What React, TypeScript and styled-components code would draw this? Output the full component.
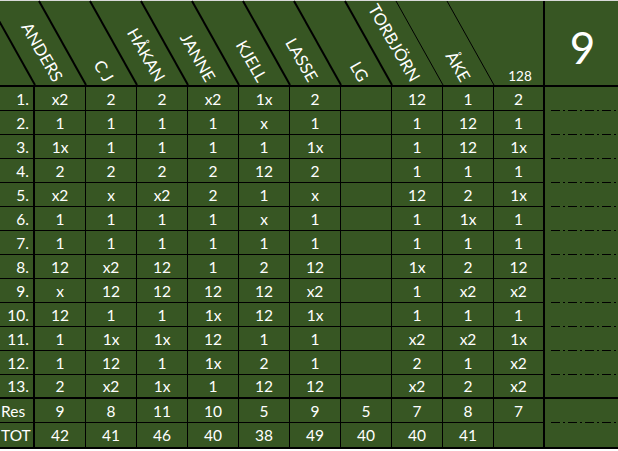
import styled, { createGlobalStyle, css } from "styled-components"

const GREEN = "#375623"

const GlobalStyle = createGlobalStyle`
  * { box-sizing: border-box; }
  body { margin: 0; background: #ffffff; }
`

const players = ["ANDERS", "C J", "HÅKAN", "JANNE", "KJELL", "LASSE", "LG", "TORBJÖRN", "ÅKE"]

const rows: string[][] = [
  ["x2", "2", "2", "x2", "1x", "2", "", "12", "1", "2"],
  ["1", "1", "1", "1", "x", "1", "", "1", "12", "1"],
  ["1x", "1", "1", "1", "1", "1x", "", "1", "12", "1x"],
  ["2", "2", "2", "2", "12", "2", "", "1", "1", "1"],
  ["x2", "x", "x2", "2", "1", "x", "", "12", "2", "1x"],
  ["1", "1", "1", "1", "x", "1", "", "1", "1x", "1"],
  ["1", "1", "1", "1", "1", "1", "", "1", "1", "1"],
  ["12", "x2", "12", "1", "2", "12", "", "1x", "2", "12"],
  ["x", "12", "12", "12", "12", "x2", "", "1", "x2", "x2"],
  ["12", "1", "1", "1x", "12", "1x", "", "1", "1", "1"],
  ["1", "1x", "1x", "12", "1", "1", "", "x2", "x2", "1x"],
  ["1", "12", "1", "1x", "2", "1", "", "2", "1", "x2"],
  ["2", "x2", "1x", "1", "12", "12", "", "x2", "2", "x2"],
]

const results = ["9", "8", "11", "10", "5", "9", "5", "7", "8", "7"]
const totals = ["42", "41", "46", "40", "38", "49", "40", "40", "41", ""]

const Sheet = styled.div`
  display: grid;
  grid-template-columns: 35px repeat(10, 51px) 73px;
  grid-template-rows: 86px repeat(14, 24px) 26px;
  width: 618px;
  background: ${GREEN};
  border-top: 1px solid #d9d9d9;
  color: #ffffff;
  font-family: Lato, "Open Sans", sans-serif;
  font-size: 15.5px;
`

const HeadCell = styled.div<{ $split?: boolean }>`
  position: relative;
  display: flex;
  align-items: flex-end;
  justify-content: center;
  padding: 0 0 1px 3px;
  border-bottom: 2px solid #000;
  border-right: ${(p) => (p.$split ? "2px solid #000" : "none")};
  font-size: 13.5px;
`

const Diagonal = styled.svg`
  position: absolute;
  top: 0;
  left: 0;
  overflow: visible;
`

const Name = styled.span`
  position: absolute;
  right: calc(100% - 16px);
  bottom: 1px;
  transform-origin: 100% 100%;
  transform: rotate(60deg);
  white-space: nowrap;
  line-height: 1;
  font-size: 16.5px;
`

const Round = styled.div`
  display: flex;
  align-items: center;
  justify-content: center;
  padding: 8px 0 0 2px;
  border-bottom: 2px solid #000;
  font-size: 44px;
`

const Label = styled.div<{ $line: number; $left?: boolean }>`
  display: flex;
  align-items: center;
  justify-content: ${(p) => (p.$left ? "flex-start" : "flex-end")};
  padding: 0 4px 0 1px;
  border-right: 2px solid #000;
  border-bottom: ${(p) => p.$line}px solid #000;
`

const Cell = styled.div<{ $line: number; $split?: boolean }>`
  display: flex;
  align-items: center;
  justify-content: center;
  border-right: ${(p) => (p.$split ? 2 : 1)}px solid #000;
  border-bottom: ${(p) => p.$line}px solid #000;
`

const Side = styled.div<{ $solid?: boolean }>`
  ${(p) =>
    p.$solid
      ? css`
          border-bottom: 2px solid #000;
        `
      : css`
          background-image: repeating-linear-gradient(
            to right,
            #000 0 9px,
            transparent 9px 12px,
            #000 12px 14px,
            transparent 14px 17px
          );
          background-size: calc(100% - 6px) 1px;
          background-position: right bottom;
          background-repeat: no-repeat;
        `}
`

function HeaderName({ name, width, thin }: { name?: string; width: number; thin?: boolean }) {
  return (
    <HeadCell>
      <Diagonal width={width} height={84}>
        <line x1={width - 47} y1={0} x2={width} y2={84} stroke="#000" strokeWidth={thin ? 1 : 2} />
      </Diagonal>
      {name && <Name>{name}</Name>}
    </HeadCell>
  )
}

function Row({ label, values, line, side, left }: { label: string; values: string[]; line: number; side: boolean; left?: boolean }) {
  return (
    <>
      <Label $line={line} $left={left}>{label}</Label>
      {values.map((v, i) => (
        <Cell key={i} $line={line} $split={i === values.length - 1}>{v}</Cell>
      ))}
      <Side $solid={side} />
    </>
  )
}

export default function App() {
  return (
    <>
      <GlobalStyle />
      <Sheet>
        <HeaderName width={35} />
        {players.map((p, i) => (
          <HeaderName key={p} name={p} width={51} thin={i >= 7} />
        ))}
        <HeadCell $split>128</HeadCell>
        <Round>9</Round>

        {rows.map((r, i) => (
          <Row key={i} label={`${i + 1}.`} values={r} line={i === 12 ? 2 : 1} side={i === 12} />
        ))}
        <Row label="Res" values={results} line={1} side={false} left />
        <Row label="TOT" values={totals} line={2} side left />
      </Sheet>
    </>
  )
}
